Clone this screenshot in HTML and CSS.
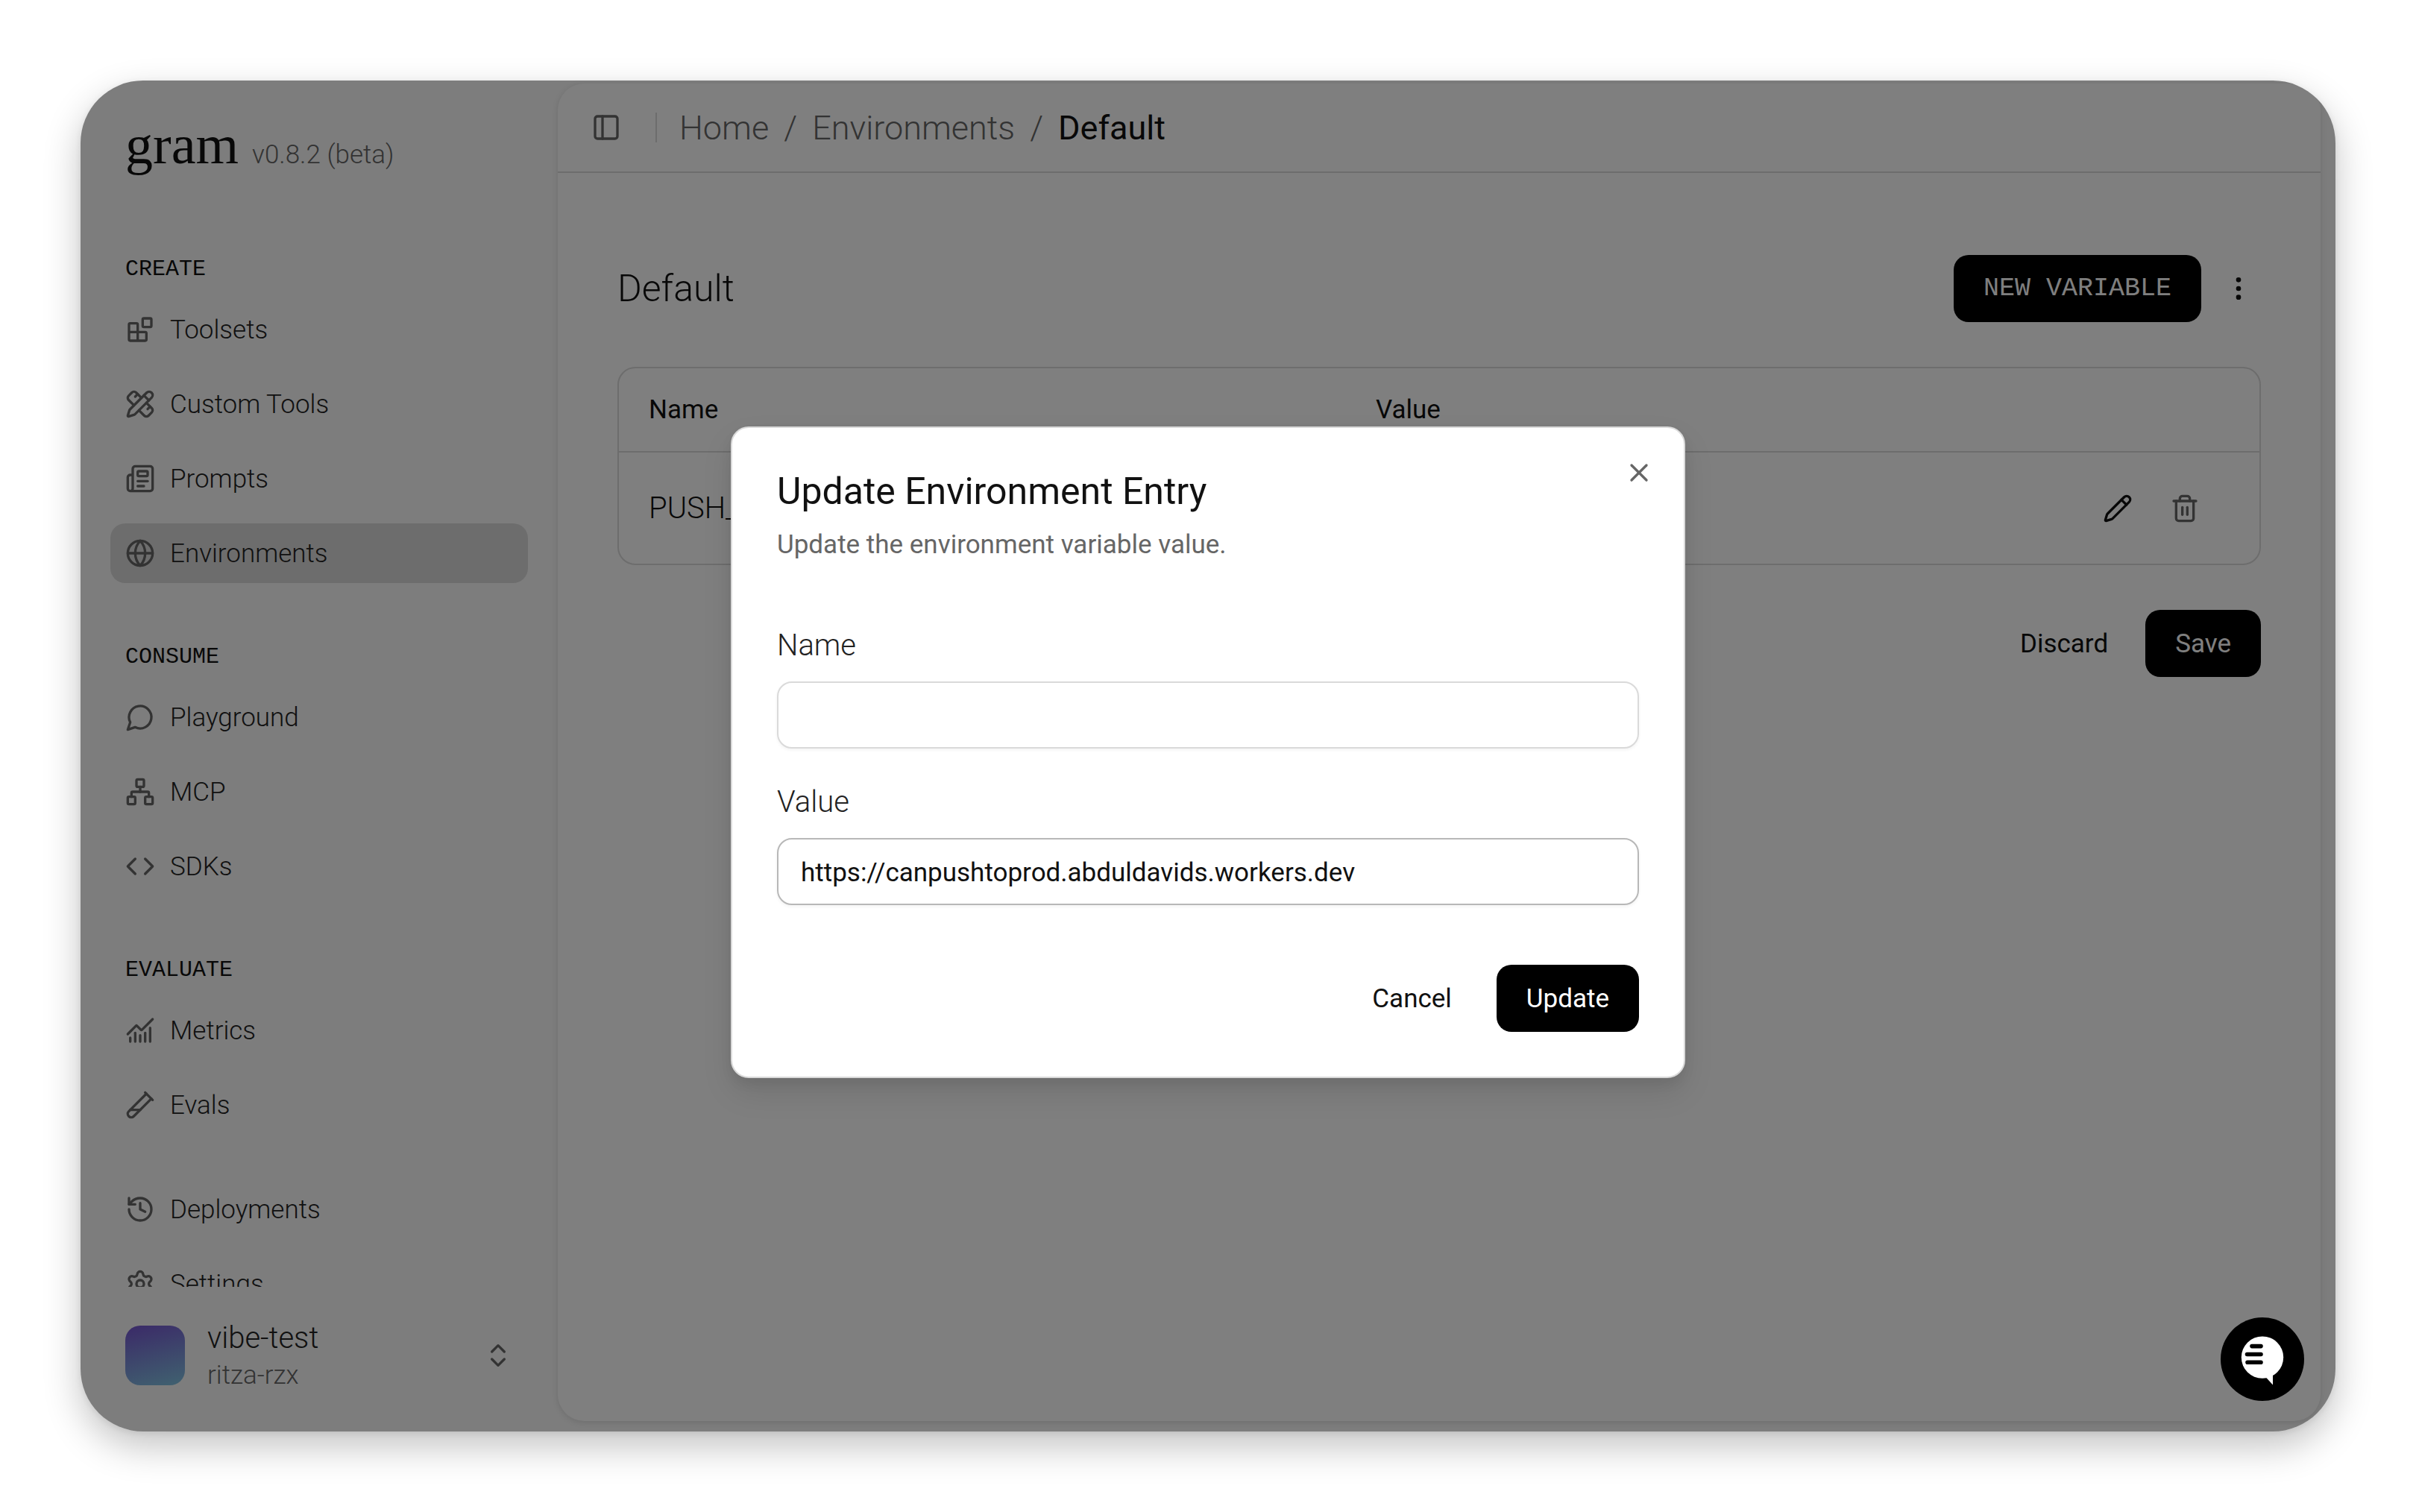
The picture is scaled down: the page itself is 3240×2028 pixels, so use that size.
FILE: index.html
```
<!DOCTYPE html>
<html lang="en">
<head>
<meta charset="utf-8">
<meta name="viewport" content="width=device-width, initial-scale=1">
<title>Gram – Environments</title>
<link rel="stylesheet" href="styles.css">
</head>
<body>
<div class="window">
  <aside class="sidebar">
    <header class="brand">
      <a class="brand-name" href="#">gram</a>
      <span class="brand-version">v0.8.2 (beta)</span>
    </header>

    <nav class="nav">
      <section class="nav-group">
        <h2 class="nav-heading">CREATE</h2>
        <ul class="nav-list">
          <li><a class="nav-item" href="#"><svg class="icon" viewBox="0 0 24 24"><rect width="7" height="7" x="14" y="3" rx="1"/><path d="M10 21V8a1 1 0 0 0-1-1H4a1 1 0 0 0-1 1v12a1 1 0 0 0 1 1h12a1 1 0 0 0 1-1v-5a1 1 0 0 0-1-1H3"/></svg><span class="nav-label">Toolsets</span></a></li>
          <li><a class="nav-item" href="#"><svg class="icon" viewBox="0 0 24 24"><path d="M13 7 8.7 2.7a2.41 2.41 0 0 0-3.4 0L2.7 5.3a2.41 2.41 0 0 0 0 3.4L7 13"/><path d="m8 6 2-2"/><path d="m18 16 2-2"/><path d="m17 11 4.3 4.3c.94.94.94 2.46 0 3.4l-2.6 2.6c-.94.94-2.46.94-3.4 0L11 17"/><path d="M21.174 6.812a1 1 0 0 0-3.986-3.987L3.842 16.174a2 2 0 0 0-.5.83l-1.321 4.352a.5.5 0 0 0 .623.622l4.353-1.32a2 2 0 0 0 .83-.497z"/><path d="m15 5 4 4"/></svg><span class="nav-label">Custom Tools</span></a></li>
          <li><a class="nav-item" href="#"><svg class="icon" viewBox="0 0 24 24"><path d="M15 18h-5"/><path d="M18 14h-8"/><path d="M4 22h16a2 2 0 0 0 2-2V4a2 2 0 0 0-2-2H8a2 2 0 0 0-2 2v16a2 2 0 0 1-4 0v-9a2 2 0 0 1 2-2h2"/><rect width="8" height="4" x="10" y="6" rx="1"/></svg><span class="nav-label">Prompts</span></a></li>
          <li><a class="nav-item nav-item-active" href="#" aria-current="page"><svg class="icon" viewBox="0 0 24 24"><circle cx="12" cy="12" r="10"/><path d="M12 2a14.5 14.5 0 0 0 0 20 14.5 14.5 0 0 0 0-20"/><path d="M2 12h20"/></svg><span class="nav-label">Environments</span></a></li>
        </ul>
      </section>
      <section class="nav-group">
        <h2 class="nav-heading">CONSUME</h2>
        <ul class="nav-list">
          <li><a class="nav-item" href="#"><svg class="icon" viewBox="0 0 24 24"><path d="M7.9 20A9 9 0 1 0 4 16.1L2 22Z"/></svg><span class="nav-label">Playground</span></a></li>
          <li><a class="nav-item" href="#"><svg class="icon" viewBox="0 0 24 24"><rect x="16" y="16" width="6" height="6" rx="1"/><rect x="2" y="16" width="6" height="6" rx="1"/><rect x="9" y="2" width="6" height="6" rx="1"/><path d="M5 16v-3a1 1 0 0 1 1-1h12a1 1 0 0 1 1 1v3"/><path d="M12 12V8"/></svg><span class="nav-label">MCP</span></a></li>
          <li><a class="nav-item" href="#"><svg class="icon" viewBox="0 0 24 24"><path d="m16 18 6-6-6-6"/><path d="m8 6-6 6 6 6"/></svg><span class="nav-label">SDKs</span></a></li>
        </ul>
      </section>
      <section class="nav-group">
        <h2 class="nav-heading">EVALUATE</h2>
        <ul class="nav-list">
          <li><a class="nav-item" href="#"><svg class="icon" viewBox="0 0 24 24"><path d="M12 16v5"/><path d="M16 14v7"/><path d="M20 10v11"/><path d="m22 3-8.646 8.646a.5.5 0 0 1-.708 0L9.354 8.354a.5.5 0 0 0-.707 0L2 15"/><path d="M4 18v3"/><path d="M8 14v7"/></svg><span class="nav-label">Metrics</span></a></li>
          <li><a class="nav-item" href="#"><svg class="icon" viewBox="0 0 24 24"><path d="M21 7 6.82 21.18a2.83 2.83 0 0 1-3.99-.01a2.83 2.83 0 0 1 0-4L17 3"/><path d="m16 2 6 6"/><path d="M12 16H4"/></svg><span class="nav-label">Evals</span></a></li>
        </ul>
      </section>
      <section class="nav-group">
        <ul class="nav-list">
          <li><a class="nav-item" href="#"><svg class="icon" viewBox="0 0 24 24"><path d="M3 12a9 9 0 1 0 9-9 9.75 9.75 0 0 0-6.74 2.74L3 8"/><path d="M3 3v5h5"/><path d="M12 7v5l4 2"/></svg><span class="nav-label">Deployments</span></a></li>
          <li><a class="nav-item" href="#"><svg class="icon" viewBox="0 0 24 24"><path d="M9.671 4.136a2.34 2.34 0 0 1 4.659 0 2.34 2.34 0 0 0 3.319 1.915 2.34 2.34 0 0 1 2.33 4.033 2.34 2.34 0 0 0 0 3.831 2.34 2.34 0 0 1-2.33 4.033 2.34 2.34 0 0 0-3.319 1.915 2.34 2.34 0 0 1-4.659 0 2.34 2.34 0 0 0-3.32-1.915 2.34 2.34 0 0 1-2.33-4.033 2.34 2.34 0 0 0 0-3.831A2.34 2.34 0 0 1 6.35 6.051a2.34 2.34 0 0 0 3.319-1.915"/><circle cx="12" cy="12" r="3"/></svg><span class="nav-label">Settings</span></a></li>
        </ul>
      </section>
    </nav>

    <button class="account" type="button">
      <span class="account-avatar"></span>
      <span class="account-text">
        <span class="account-project">vibe-test</span>
        <span class="account-org">ritza-rzx</span>
      </span>
      <svg class="icon" viewBox="0 0 24 24"><path d="m7 15 5 5 5-5"/><path d="m7 9 5-5 5 5"/></svg>
    </button>
  </aside>

  <main class="panel">
    <header class="topbar">
      <button class="icon-button" type="button" aria-label="Toggle sidebar"><svg class="icon" viewBox="0 0 24 24"><rect width="18" height="18" x="3" y="3" rx="2"/><path d="M9 3v18"/></svg></button>
      <span class="topbar-divider"></span>
      <nav class="breadcrumb" aria-label="Breadcrumb">
        <a class="crumb" href="#">Home</a>
        <span class="crumb">/</span>
        <a class="crumb" href="#">Environments</a>
        <span class="crumb">/</span>
        <span class="crumb-current">Default</span>
      </nav>
    </header>

    <div class="content">
      <div class="title-row">
        <h1 class="title">Default</h1>
        <div class="title-actions">
          <button class="button button-primary button-mono" type="button">NEW VARIABLE</button>
          <button class="icon-button menu-button" type="button" aria-label="More actions"><svg class="icon icon-strong" viewBox="0 0 24 24"><circle cx="12" cy="12" r="1"/><circle cx="12" cy="5" r="1"/><circle cx="12" cy="19" r="1"/></svg></button>
        </div>
      </div>

      <div class="table-frame">
        <table class="table">
          <thead>
            <tr><th class="col-name">Name</th><th class="col-value">Value</th><th></th></tr>
          </thead>
          <tbody>
            <tr>
              <td>PUSH_</td>
              <td></td>
              <td class="cell-actions">
                <div class="row-actions">
                  <button class="icon-button row-button" type="button" aria-label="Edit"><svg class="icon icon-strong" viewBox="0 0 24 24"><path d="M21.174 6.812a1 1 0 0 0-3.986-3.987L3.842 16.174a2 2 0 0 0-.5.83l-1.321 4.352a.5.5 0 0 0 .623.622l4.353-1.32a2 2 0 0 0 .83-.497z"/><path d="m15 5 4 4"/></svg></button>
                  <button class="icon-button row-button" type="button" aria-label="Delete"><svg class="icon" viewBox="0 0 24 24"><path d="M3 6h18"/><path d="M19 6v14a2 2 0 0 1-2 2H7a2 2 0 0 1-2-2V6"/><path d="M8 6V4a2 2 0 0 1 2-2h4a2 2 0 0 1 2 2v2"/><path d="M10 11v6"/><path d="M14 11v6"/></svg></button>
                </div>
              </td>
            </tr>
          </tbody>
        </table>
      </div>

      <div class="form-actions">
        <button class="button" type="button">Discard</button>
        <button class="button button-primary" type="button">Save</button>
      </div>
    </div>
  </main>

  <div class="backdrop">
    <form class="dialog" role="dialog" aria-labelledby="dialog-title">
      <button class="icon-button dialog-close" type="button" aria-label="Close"><svg class="icon" viewBox="0 0 24 24"><path d="M18 6 6 18"/><path d="m6 6 12 12"/></svg></button>
      <h2 class="dialog-title" id="dialog-title">Update Environment Entry</h2>
      <p class="dialog-text">Update the environment variable value.</p>
      <div class="fields">
        <div class="field">
          <label class="label" for="entry-name">Name</label>
          <input class="input" id="entry-name" type="text">
        </div>
        <div class="field">
          <label class="label" for="entry-value">Value</label>
          <input class="input input-focused" id="entry-value" type="text" value="https://canpushtoprod.abduldavids.workers.dev">
        </div>
      </div>
      <div class="dialog-actions">
        <button class="button" type="button">Cancel</button>
        <button class="button button-primary" type="submit">Update</button>
      </div>
    </form>
  </div>

  <button class="chat" type="button" aria-label="Open chat">
    <svg class="chat-icon" viewBox="0 0 112 112"><circle cx="56" cy="53.6" r="28.2" fill="#fff"/><path d="M60 79.500 70 90.500V76z" fill="#fff"/><path d="M42 38.600h12M35.500 49.500h18.500M36 60.300h18" fill="none" stroke="#000" stroke-width="5.600" stroke-linecap="round"/></svg>
  </button>
</div>
</body>
</html>
```
FILE: styles.css
```
:root {
  --ink: #111;
  --ink-soft: #222;
  --muted: #666;
  --line: #dadada;
  --sans: Roboto, "Liberation Sans", sans-serif;
  --mono: "Liberation Mono", monospace;
}

* { box-sizing: border-box; }

body {
  margin: 0;
  padding: 108px;
  background: #fff;
  color: var(--ink);
  font: 400 35px/50px var(--sans);
}

h1, h2, p, ul { margin: 0; padding: 0; font-weight: inherit; }
ul { list-style: none; }
a { color: inherit; text-decoration: none; }

button {
  padding: 0;
  border: 0;
  background: none;
  color: inherit;
  font: inherit;
  cursor: pointer;
}

.icon {
  display: block;
  flex: none;
  width: 40px;
  height: 40px;
  fill: none;
  stroke: var(--muted);
  stroke-width: 2;
  stroke-linecap: round;
  stroke-linejoin: round;
}
.icon-strong { stroke: var(--ink); }

.window {
  position: relative;
  display: flex;
  height: calc(100vh - 216px);
  overflow: hidden;
  border-radius: 84px;
  background: #fafafa;
  box-shadow: 0 2px 8px rgba(0, 0, 0, .08), 0 20px 50px rgba(0, 0, 0, .24);
}

/* Sidebar */
.sidebar {
  display: flex;
  flex: none;
  flex-direction: column;
  width: 640px;
}

.brand {
  display: flex;
  flex: none;
  align-items: baseline;
  gap: 18px;
  height: 214px;
  padding: 44px 60px 0;
}
.brand-name { font: 400 74px/84px "Liberation Serif", serif; }
.brand-version { color: var(--muted); font-weight: 300; }

.nav {
  display: flex;
  flex: 1;
  flex-direction: column;
  gap: 60px;
  min-height: 0;
  padding: 0 40px;
  overflow: hidden;
}
.nav-heading {
  height: 80px;
  padding: 0 20px;
  font: 400 30px/78px var(--mono);
}
.nav-list { display: flex; flex-direction: column; gap: 20px; }
.nav-item {
  display: flex;
  align-items: center;
  gap: 20px;
  height: 80px;
  padding: 0 20px;
  border-radius: 20px;
  color: var(--ink-soft);
  font-weight: 300;
}
.nav-item-active { background: var(--line); }
.nav-label { padding-top: 2px; }

.account {
  display: flex;
  flex: none;
  align-items: center;
  gap: 30px;
  padding: 40px 60px 50px;
  text-align: left;
  font-weight: 300;
}
.account-avatar {
  width: 80px;
  height: 80px;
  border-radius: 20px;
  background: linear-gradient(165deg, #7654d0, #80c4e0);
}
.account-text { display: flex; flex: 1; flex-direction: column; padding-top: 4px; }
.account-project { font-size: 40px; color: var(--ink-soft); }
.account-org { color: var(--muted); }

/* Main panel */
.panel {
  flex: 1;
  min-width: 0;
  margin: 4px 20px 14px 0;
  border-radius: 36px;
  background: #fff;
  box-shadow: 0 2px 8px rgba(0, 0, 0, .12);
}

.topbar {
  display: flex;
  align-items: center;
  height: 120px;
  padding: 0 45px;
  border-bottom: 2px solid var(--line);
}
.topbar-divider {
  width: 2px;
  height: 40px;
  margin: 0 30px 0 46px;
  background: var(--line);
}
.breadcrumb {
  display: flex;
  gap: 20px;
  padding-top: 2px;
  font-size: 45px;
  font-weight: 300;
}
.crumb { color: var(--muted); }
.crumb-current { font-weight: 400; }

.content {
  display: flex;
  flex-direction: column;
  gap: 60px;
  padding: 110px 80px;
}
.title-row { display: flex; align-items: center; justify-content: space-between; }
.title { font-size: 50px; font-weight: 300; }
.title-actions { display: flex; align-items: center; gap: 20px; }

.button {
  height: 90px;
  padding: 2px 40px 0;
  border-radius: 20px;
}
.button-primary { background: #000; color: #fff; }
.button-mono { padding-top: 0; font-family: var(--mono); }

.menu-button { width: 60px; padding: 0 10px; }

.table-frame { border: 2px solid var(--line); border-radius: 24px; }
.table { width: 100%; border-collapse: collapse; table-layout: fixed; }
.table th {
  height: 112px;
  padding: 0 40px;
  border-bottom: 2px solid var(--line);
  font-weight: 400;
  text-align: left;
}
.table td {
  height: 150px;
  padding: 0 40px;
  font-size: 40px;
  font-weight: 300;
}
.col-name, .col-value { width: 975px; }
.table .cell-actions { padding-right: 60px; }
.row-actions { display: flex; justify-content: flex-end; gap: 10px; }
.row-button { padding: 20px; }

.form-actions { display: flex; justify-content: flex-end; gap: 10px; }

/* Dialog */
.backdrop {
  position: absolute;
  inset: 0;
  display: grid;
  place-items: center;
  padding-bottom: 10px;
  background: rgba(0, 0, 0, .5);
}
.dialog {
  position: relative;
  width: 1280px;
  max-width: 90%;
  padding: 60px;
  border: 2px solid var(--line);
  border-radius: 24px;
  background: #fff;
  box-shadow: 0 20px 40px rgba(0, 0, 0, .1), 0 8px 16px rgba(0, 0, 0, .06);
}
.dialog-close { position: absolute; top: 40px; right: 40px; }
.dialog-title { font-size: 50px; }
.dialog-text { margin-top: 22px; color: var(--muted); }

.fields {
  display: flex;
  flex-direction: column;
  gap: 40px;
  margin: 80px 0;
}
.field { display: flex; flex-direction: column; gap: 18px; }
.label { color: var(--ink-soft); font-size: 40px; font-weight: 300; line-height: 60px; }
.field + .field .label { padding-top: 2px; }
.input {
  width: 100%;
  height: 90px;
  padding: 2px 30px 0;
  border: 2px solid var(--line);
  border-radius: 20px;
  background: #fff;
  box-shadow: 0 2px 4px rgba(0, 0, 0, .05);
  color: var(--ink);
  font: inherit;
  outline: none;
}
.input-focused { border-color: #b8b8b8; }
.dialog-actions { display: flex; justify-content: flex-end; gap: 20px; }

/* Chat launcher */
.chat {
  position: absolute;
  right: 42px;
  bottom: 41px;
  width: 112px;
  height: 112px;
  border-radius: 50%;
  background: #000;
}
.chat-icon { display: block; width: 112px; height: 112px; }
```
